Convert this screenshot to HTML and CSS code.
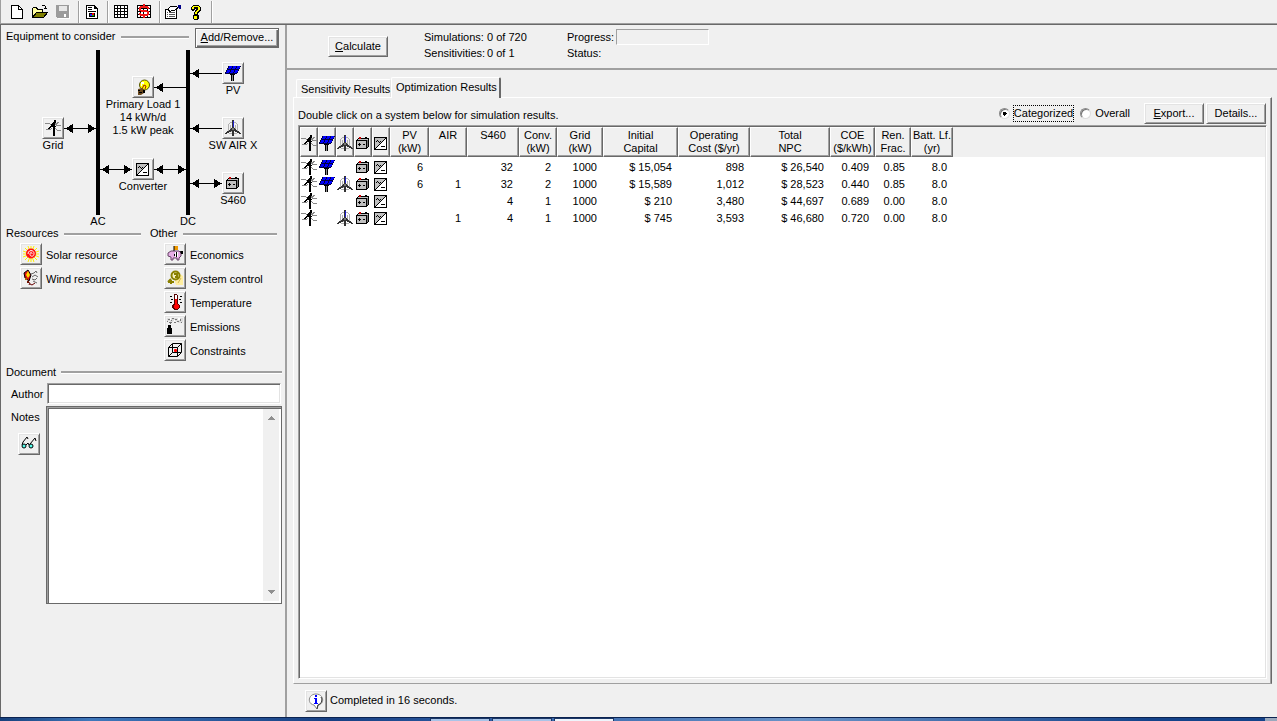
FILE: index.html
```html
<!DOCTYPE html>
<html lang="en">
<head>
<meta charset="utf-8">
<title>Optimization Results</title>
<link rel="stylesheet" href="styles.css">
</head>
<body>
<svg class="defs" aria-hidden="true">
  <symbol id="i-grid" viewBox="0 0 16 16">
    <path d="M0 3.500H4L7 5L14 2.500M1 9.500H5L7 8.500M10 8.500L13 10.500H16M10 4.500L13 5.500H16" fill="none" stroke="#888"/>
    <path d="M9 0h2v3h-1v13h-2v-11h-1v-2h1v-1h1zM6 4h2v2h-1v1h-1v1h-2v-1h1v-1h1zM3 8h2v1h-2zM7 6h4v1h-4z" fill="#000"/>
  </symbol>
  <symbol id="i-pv" viewBox="0 0 16 16">
    <path d="M3 1H16V2H15V4H14V6H13V8H12V9H0V7H1V5H2V3H3Z" fill="#000040"/>
    <path d="M4 1h3v2h-1v1h-3v-1h1zM8 1h3v2h-1v1h-3v-1h1zM12 1h3v2h-1v1h-3v-1h1zM2 5h3v2h-1v1h-3v-1h1zM6 5h3v2h-1v1h-3v-1h1zM10 5h3v2h-1v1h-3v-1h1z" fill="#0000ff"/>
    <path d="M5 9h5v1h-1v6h-3v-6h-1z" fill="#000"/><path d="M7 10h1v6h-1z" fill="#888"/>
  </symbol>
  <symbol id="i-wind" viewBox="0 0 16 16">
    <path d="M4 3h1v1h-1zM11 3h1v1h-1zM3 4h1v7h-1zM12 4h1v7h-1zM5 5h1v6h-1zM10 5h1v6h-1zM5 2h2v1h-2zM9 2h2v1h-2zM1 12h1v1h-1zM4 13h3v1h-3zM9 13h3v1h-3zM6 11h1v1h-1z" fill="#b0b0b0"/>
    <path d="M7 0h2v8h1v1h1v1h1v1h2v1h1v1h1v1h-2v-1h-2v-1h-2v-1h-1v5h-2v-5h-1v1h-2v1h-2v1h-2v-1h1v-1h1v-1h2v-1h1v-1h1v-1h1z" fill="#333"/>
    <path d="M8 1h1v6h-1z" fill="#2222d0"/><path d="M7 8h2v2h-2z" fill="#777"/>
  </symbol>
  <symbol id="i-batt" viewBox="0 0 16 16">
    <path d="M3 3h11v9h-1v1h-1v1h-11v-9h1v-1h1z" fill="#000"/>
    <path d="M3 4h10v1h-10zM2 6h9v7h-9z" fill="#c0c0c0"/><path d="M12 5h1v7h-1z" fill="#777"/>
    <path d="M3 9h3v1h-3zM4 8h1v3h-1zM8 9h2v1h-2zM10 2h2v1h-2z" fill="#000"/><path d="M4 2h2v2h-2z" fill="#d00000"/>
  </symbol>
  <symbol id="i-conv" viewBox="0 0 16 16">
    <path d="M1 2H14V15H1Z" fill="#000"/><path d="M2 3H13V14H2Z" fill="#fff"/><path d="M2 3H13L2 14Z" fill="#c0c0c0"/>
    <path d="M12 3h1v1h-1zM11 4h1v1h-1zM10 5h1v1h-1zM9 6h1v1h-1zM8 7h1v1h-1zM7 8h1v1h-1zM6 9h1v1h-1zM5 10h1v1h-1zM4 11h1v1h-1zM3 12h1v1h-1zM2 13h1v1h-1zM8 11h4v1h-4zM3 6h1v-1h1v1h1v1h1v-1h1v1h-1v1h-1v-1h-1v-1h-1v1h-1z" fill="#000"/>
  </symbol>
</svg>

<header class="toolbar" role="toolbar" aria-label="Standard">
  <button class="tool" aria-label="New"><svg viewBox="0 0 16 16"><path d="M3 2H9L13 6V14H3Z" fill="#fff"/><path d="M2.500 1.500H9.500L13.500 5.500V14.500H2.500ZM9.500 1.500V5.500H13.500" fill="none" stroke="#000"/></svg></button>
  <button class="tool" aria-label="Open"><svg viewBox="0 0 16 16"><path d="M1 4H5V5H11V8H4L1 13Z" fill="#ffffa0"/><path d="M4 8H15L12 13H1Z" fill="#808000"/><path d="M.5 13.500V4.500L1.500 3.500H4.500L5.500 5.500H10.500V7.500M.5 13.500L4.500 8.500H15.500L11.500 13.500ZM9.500 2.500L10.500 1.500H12.500L14.500 4.500M12 4.500H15" fill="none" stroke="#000"/></svg></button>
  <button class="tool" aria-label="Save"><svg viewBox="0 0 16 16"><path d="M2 2H15V15H3L2 14Z" fill="#fff"/><path d="M1 1H14V14H2L1 13Z" fill="#9c9c9c"/><path d="M4 2H12V7H4Z" fill="#e8e8e8"/><path d="M9 10H11V13H9Z" fill="#fff"/></svg></button>
  <span class="sep"></span>
  <button class="tool" aria-label="Report"><svg viewBox="0 0 16 16"><path d="M2 1H11V2H12V3H13V4H14V15H2Z" fill="#000"/><path d="M3 2H10V5H13V14H3Z" fill="#fff"/><path d="M4 3h4v1h-4zM4 5h4v1h-4zM4 7h8v1h-8zM5 9h6v4h-6z" fill="#000"/><path d="M6 10h2v2h-2z" fill="#22f"/><path d="M8 9h2v2h-2z" fill="#f00"/><path d="M8 11h2v1h-2z" fill="#0c0"/></svg></button>
  <span class="sep"></span>
  <button class="tool" aria-label="Table"><svg viewBox="0 0 16 16"><path d="M1 1H15V14H1Z" fill="#000"/><path d="M2 2h2v2h-2zM5 2h2v2h-2zM8 2h3v2h-3zM12 2h2v2h-2zM2 5h2v2h-2zM5 5h2v2h-2zM8 5h3v2h-3zM12 5h2v2h-2zM2 8h2v2h-2zM5 8h2v2h-2zM8 8h3v2h-3zM12 8h2v2h-2zM2 11h2v2h-2zM5 11h2v2h-2zM8 11h3v2h-3zM12 11h2v2h-2z" fill="#fff"/></svg></button>
  <button class="tool" aria-label="Costs"><svg viewBox="0 0 16 16"><path d="M1 1H15V14H1Z" fill="#000"/><path d="M2 2h2v2h-2zM5 2h2v2h-2zM8 2h3v2h-3zM12 2h2v2h-2zM2 5h2v2h-2zM5 5h2v2h-2zM8 5h3v2h-3zM12 5h2v2h-2zM2 8h2v2h-2zM5 8h2v2h-2zM8 8h3v2h-3zM12 8h2v2h-2zM2 11h2v2h-2zM5 11h2v2h-2zM8 11h3v2h-3zM12 11h2v2h-2z" fill="#fff"/><path d="M7 0h2v2h3v1h1v2h-2v-1h-6v2h6v1h2v4h-1v1h-3v2h-2v-2h-3v-1h-1v-2h2v1h6v-2h-6v-1h-2v-4h1v-1h3z" fill="#f01818"/></svg></button>
  <span class="sep"></span>
  <button class="tool" aria-label="Preferences"><svg viewBox="0 0 16 16"><path d="M0 5H12V15H0Z" fill="#000"/><path d="M1 6H11V14H1Z" fill="#fff"/><path d="M2 8h1v1h-1zM4 8h6v1h-6zM2 10h1v1h-1zM4 10h6v1h-6zM2 12h1v1h-1zM4 12h6v1h-6z" fill="#555"/><path d="M3 5L6 2H11L13 4L9 7L7 6L5 8Z" fill="#fff" stroke="#000"/><path d="M13 1H16V5H14V4H13Z" fill="#008"/></svg></button>
  <button class="tool" aria-label="Help"><svg viewBox="0 0 16 16"><path d="M5 1h6v1h1v1h1v4h-1v1h-1v1h-1v2h1v4h-1v1h-4v-1h-1v-4h1v-3h1v-2h1v-1h-1v1h-1v1h-2v-1h-1v-3h1v-1h1z" fill="#000"/><path d="M5 2h6v1h1v3h-1v1h-1v1h-1v2h-2v-2h1v-1h1v-1h1v-3h-4v2h-2v-2h1zM6 12h3v3h-3z" fill="#ff0"/></svg></button>
  <span class="sep"></span>
</header>

<div class="workspace">
  <aside class="side">
    <div class="heading equipment"><h2>Equipment to consider</h2><button class="btn add"><u>A</u>dd/Remove...</button></div>
    <div class="schematic">
      <svg class="wires" viewBox="1 50 283 178" aria-hidden="true">
        <path d="M96 50H100V215H96ZM186 50H190V215H186Z"/>
        <path d="M190 73.500H222M154 87.500H186M64 128.500H96M190 128.500H222M100 169.500H132M154 169.500H186M190 183.500H222" fill="none" stroke="#000"/>
        <path d="M191 73.500L199 69V78ZM155 87.500L163 83V92ZM65 128.500L73 124V133ZM96 128.500L88 124V133ZM191 128.500L199 124V133ZM101 169.500L109 165V174ZM132 169.500L124 165V174ZM155 169.500L163 165V174ZM186 169.500L178 165V174ZM191 183.500L199 179V188ZM222 183.500L214 179V188Z"/>
      </svg>
      <div class="node n-pv"><button class="icon-btn" aria-label="PV"><svg><use href="#i-pv"/></svg></button><span>PV</span></div>
      <div class="node n-load"><button class="icon-btn" aria-label="Primary Load 1"><svg class="smooth" viewBox="0 0 16 16"><circle cx="9.500" cy="6" r="5" fill="#ff0" stroke="#550"/><path d="M6 3H9V5H7V7H6Z" fill="#fffff0"/><path d="M7 10L9 6L11 7L10 10" fill="none" stroke="#a02000"/><path d="M3 10L7 9L10 11L9 14L6 16H3Z" fill="#6b4a20"/><path d="M3 11H5V12H3ZM4 13H7V14H4ZM8 11H10V14H8Z" fill="#000"/></svg></button><span>Primary Load 1<br>14 kWh/d<br>1.5 kW peak</span></div>
      <div class="node n-grid"><button class="icon-btn" aria-label="Grid"><svg><use href="#i-grid"/></svg></button><span>Grid</span></div>
      <div class="node n-wind"><button class="icon-btn" aria-label="SW AIR X"><svg><use href="#i-wind"/></svg></button><span>SW AIR X</span></div>
      <div class="node n-conv"><button class="icon-btn" aria-label="Converter"><svg><use href="#i-conv"/></svg></button><span>Converter</span></div>
      <div class="node n-batt"><button class="icon-btn" aria-label="S460"><svg><use href="#i-batt"/></svg></button><span>S460</span></div>
      <div class="node n-ac">AC</div>
      <div class="node n-dc">DC</div>
    </div>
    <div class="groups">
      <section>
        <div class="heading"><h2>Resources</h2></div>
        <div class="item"><button class="icon-btn" id="solar" aria-labelledby="l-solar"><svg class="smooth" viewBox="0 0 16 16"><path d="M8 0V16M0 8H16M2 2L14 14M14 2L2 14M5 0L11 16M11 0L5 16M0 5L16 11M0 11L16 5" stroke="#fe0" fill="none"/><circle cx="8" cy="7.500" r="5" fill="#f11"/><path d="M5 8C5 3.500 11 3.500 11 7.500S6.500 10.500 7 8S9 6 9 8" fill="none" stroke="#fff"/></svg></button><label id="l-solar" for="solar">Solar resource</label></div>
        <div class="item"><button class="icon-btn" id="wind" aria-labelledby="l-wind"><svg class="smooth" viewBox="0 0 16 16"><path d="M1 3L5 0L8 5L6 11L2 8Z" fill="#e01010" stroke="#000"/><path d="M5 1L7 5L5 8L3 5Z" fill="#fd0"/><path d="M2 8H4V10H2ZM4 11H6V13H4Z" fill="#a60"/><path d="M6 11L4 12L7 13L6 15M7 14L9 15L12 13" fill="none" stroke="#600"/><path d="M8 4L11 3L13 1L14 3M9 7L12 5L15 7M9 9L12 10L14 8M10 11L14 13" fill="none" stroke="#666"/></svg></button><label id="l-wind" for="wind">Wind resource</label></div>
      </section>
      <section>
        <div class="heading"><h2>Other</h2></div>
        <div class="item"><button class="icon-btn" id="econ" aria-labelledby="l-econ"><svg class="smooth" viewBox="0 0 16 16"><path d="M4 5H12L14 7V10L12 12V14H10V12H6V14H4V11L1 10V7Z" fill="#e6aee6" stroke="#646"/><path d="M7 0H11V4H7Z" fill="#e90"/><path d="M7 0V5" stroke="#000"/><path d="M8 6H11V11H8Z" fill="#fff"/><path d="M9 6H10V11H9ZM7 8H8V10H7Z" fill="#000"/><path d="M13 5L16 5V8H14Z" fill="#000"/></svg></button><label id="l-econ" for="econ">Economics</label></div>
        <div class="item"><button class="icon-btn" id="ctrl" aria-labelledby="l-ctrl"><svg class="smooth" viewBox="0 0 16 16"><path d="M9 7L13 4L16 6V15H9L8 12Z" fill="#ffeea0"/><circle cx="8.500" cy="5.500" r="4" fill="#f5efc0" stroke="#8a8000" stroke-width="2"/><path d="M7 4H10V7H8M4 9L1 12M1 12H7M4 10V14" fill="none" stroke="#8a8000" stroke-width="2"/><path d="M11 13L14 8" stroke="#d6b850"/></svg></button><label id="l-ctrl" for="ctrl">System control</label></div>
        <div class="item"><button class="icon-btn" id="temp" aria-labelledby="l-temp"><svg viewBox="0 0 16 16"><path d="M7 0h3v1h1v9h1v1h1v3h-1v1h-1v1h-4v-1h-1v-1h-1v-3h1v-1h1z" fill="#500"/><path d="M8 1h2v4h-2z" fill="#fff"/><path d="M8 5h2v5h1v1h1v3h-1v1h-3v-1h-1v-3h1z" fill="#f00"/><path d="M3 2h2v1h-2zM4 5h2v1h-2zM3 8h2v1h-2zM13 2h2v1h-2zM12 5h2v1h-2zM13 8h2v1h-2z" fill="#000"/></svg></button><label id="l-temp" for="temp">Temperature</label></div>
        <div class="item"><button class="icon-btn" id="emis" aria-labelledby="l-emis"><svg viewBox="0 0 16 16"><path d="M0 16V10H1V7H4V10H5V16Z" fill="#000"/><path d="M0 0h16v4h-2v1h-3v-1h-2v-1h-3v1h-3v-1h-3z" fill="#ddd"/><path d="M1 1h2v1h-2zM4 2h1v1h-1zM5 0h2v1h-2zM8 1h2v1h-2zM10 3h2v1h-2zM13 1h1v2h-1zM14 4h1v1h-1zM2 4h3v1h-3zM3 5h1v1h-1zM7 4h2v1h-2zM0 3h1v1h-1z" fill="#777"/><path d="M3 0h1v2h-1zM7 2h1v1h-1zM11 0h2v2h-2z" fill="#fff"/></svg></button><label id="l-emis" for="emis">Emissions</label></div>
        <div class="item"><button class="icon-btn" id="cons" aria-labelledby="l-cons"><svg class="smooth" viewBox="0 0 16 16"><path d="M1.500 5.500H10.500V14.500H1.500ZM5.500 1.500H14.500V10.500L10.500 14.500M1.500 5.500L5.500 1.500M10.500 5.500L14.500 1.500M5.500 2V10.500H14M5.500 10.500L1.500 14.500" fill="none" stroke="#000"/><path d="M7 8.500H10M8.500 7V10" stroke="#f00" stroke-width="2"/></svg></button><label id="l-cons" for="cons">Constraints</label></div>
      </section>
    </div>
    <div class="heading document"><h2>Document</h2></div>
    <div class="form">
      <label for="author">Author</label><input id="author" type="text">
      <div class="notes-side"><label for="notes">Notes</label><button class="icon-btn" aria-label="View notes"><svg class="smooth" viewBox="0 0 16 16"><path d="M1 9L2 6L6 1L7 3M9 8L14 2L15 5" fill="none" stroke="#000"/><circle cx="3" cy="10" r="2" fill="#5fe" stroke="#000"/><circle cx="10" cy="10" r="2" fill="#5fe" stroke="#000"/><path d="M5 9L7 7L8 9" fill="none" stroke="#000"/></svg></button></div>
      <div class="notes-box"><textarea id="notes"></textarea><div class="scroll" aria-hidden="true"><svg viewBox="0 0 8 4"><path d="M0 4L4 0L8 4Z"/></svg><svg viewBox="0 0 8 4"><path d="M0 0H8L4 4Z"/></svg></div></div>
    </div>
  </aside>

  <main class="main">
    <section class="run">
      <button class="btn"><u>C</u>alculate</button>
      <dl class="counts"><dt>Simulations:</dt><dd>0 of 720</dd><dt>Sensitivities:</dt><dd>0 of 1</dd></dl>
      <dl class="status"><dt>Progress:</dt><dd class="bar"></dd><dt>Status:</dt><dd></dd></dl>
    </section>
    <section class="results">
      <div class="tabs" role="tablist">
        <button class="tab" role="tab" aria-selected="false">Sensitivity Results</button>
        <button class="tab active" role="tab" aria-selected="true">Optimization Results</button>
      </div>
      <div class="pane" role="tabpanel">
        <div class="controls">
          <p>Double click on a system below for simulation results.</p>
          <input type="radio" name="view" id="cat" checked><label class="focus" for="cat">Categorized</label>
          <input type="radio" name="view" id="all"><label for="all">Overall</label>
          <button class="btn wide"><u>E</u>xport...</button><button class="btn wide">Details...</button>
        </div>
        <div class="list">
          <table>
            <colgroup><col class="c-icon" span="5"><col class="c-39"><col class="c-38"><col class="c-52"><col class="c-38"><col class="c-46"><col class="c-75"><col class="c-72"><col class="c-80"><col class="c-45"><col class="c-36"><col class="c-42"><col></colgroup>
            <thead><tr>
              <th><svg class="ico"><use href="#i-grid"/></svg></th><th><svg class="ico"><use href="#i-pv"/></svg></th><th><svg class="ico"><use href="#i-wind"/></svg></th><th><svg class="ico"><use href="#i-batt"/></svg></th><th><svg class="ico"><use href="#i-conv"/></svg></th>
              <th>PV<br>(kW)</th><th>AIR</th><th>S460</th><th>Conv.<br>(kW)</th><th>Grid<br>(kW)</th><th>Initial<br>Capital</th><th>Operating<br>Cost ($/yr)</th><th>Total<br>NPC</th><th>COE<br>($/kWh)</th><th>Ren.<br>Frac.</th><th>Batt. Lf.<br>(yr)</th><td class="rest"></td>
            </tr></thead>
            <tbody>
              <tr><td><svg class="ico"><use href="#i-grid"/></svg></td><td><svg class="ico"><use href="#i-pv"/></svg></td><td></td><td><svg class="ico"><use href="#i-batt"/></svg></td><td><svg class="ico"><use href="#i-conv"/></svg></td><td>6</td><td></td><td>32</td><td>2</td><td>1000</td><td>$ 15,054</td><td>898</td><td>$ 26,540</td><td>0.409</td><td>0.85</td><td>8.0</td><td></td></tr>
              <tr><td><svg class="ico"><use href="#i-grid"/></svg></td><td><svg class="ico"><use href="#i-pv"/></svg></td><td><svg class="ico"><use href="#i-wind"/></svg></td><td><svg class="ico"><use href="#i-batt"/></svg></td><td><svg class="ico"><use href="#i-conv"/></svg></td><td>6</td><td>1</td><td>32</td><td>2</td><td>1000</td><td>$ 15,589</td><td>1,012</td><td>$ 28,523</td><td>0.440</td><td>0.85</td><td>8.0</td><td></td></tr>
              <tr><td><svg class="ico"><use href="#i-grid"/></svg></td><td></td><td></td><td><svg class="ico"><use href="#i-batt"/></svg></td><td><svg class="ico"><use href="#i-conv"/></svg></td><td></td><td></td><td>4</td><td>1</td><td>1000</td><td>$ 210</td><td>3,480</td><td>$ 44,697</td><td>0.689</td><td>0.00</td><td>8.0</td><td></td></tr>
              <tr><td><svg class="ico"><use href="#i-grid"/></svg></td><td></td><td><svg class="ico"><use href="#i-wind"/></svg></td><td><svg class="ico"><use href="#i-batt"/></svg></td><td><svg class="ico"><use href="#i-conv"/></svg></td><td></td><td>1</td><td>4</td><td>1</td><td>1000</td><td>$ 745</td><td>3,593</td><td>$ 46,680</td><td>0.720</td><td>0.00</td><td>8.0</td><td></td></tr>
            </tbody>
          </table>
        </div>
      </div>
    </section>
    <footer class="message"><button class="icon-btn" aria-label="Details"><svg class="smooth" viewBox="0 0 16 16"><path d="M8 1C16 1 17 11 10 12L9 16L6 12C-1 11 0 1 8 1Z" fill="#fff" stroke="#888"/><path d="M13 4C15 8 13 11 10 12L9 16" fill="none" stroke="#333"/><path d="M7 2H9V4H7ZM6 5H9V10H10V11H6V10H7V6H6Z" fill="#00f"/></svg></button><span>Completed in 16 seconds.</span></footer>
  </main>
</div>
<div class="taskbar" aria-hidden="true"><i></i><i></i><i class="on"></i><b></b></div>
</body>
</html>
```
FILE: styles.css
```css
* { box-sizing: border-box; }
body { margin: 0; height: 100vh; display: flex; flex-direction: column; overflow: hidden; background: #f0f0f0; color: #000; font: 11px/13px "Liberation Sans", Arial, sans-serif; }
button, input, textarea { font: inherit; color: inherit; margin: 0; }
h2, p, dl, dd { margin: 0; font: inherit; }
svg { display: block; flex: none; overflow: visible; shape-rendering: crispEdges; }
svg.smooth { shape-rendering: auto; }
.defs { position: absolute; width: 0; height: 0; }

.toolbar { display: flex; align-items: center; height: 24px; flex: none; padding-left: 5px; border-left: 1px solid #a0a0a0; }
.tool { width: 23px; height: 22px; padding: 3px; border: 0; background: none; }
.tool svg { width: 16px; height: 16px; }
.toolbar .sep { width: 1px; height: 22px; margin: 0 2px 0 3px; background: #a0a0a0; box-shadow: 1px 0 #fff; }

.workspace { flex: 1; min-height: 0; display: flex; border-top: 1px solid #696969; box-shadow: 0 -1px #a0a0a0; }
.side { width: 287px; flex: none; display: flex; flex-direction: column; border-left: 1px solid #696969; border-right: 2px solid #a0a0a0; }
.heading { display: flex; align-items: center; gap: 5px; padding-left: 5px; height: 14px; }
.heading::after { content: ""; flex: 1; height: 2px; background: #a0a0a0; border-bottom: 1px solid #fff; }
.heading h2 { white-space: nowrap; }
.equipment { height: 25px; gap: 6px; padding-right: 6px; }
.equipment h2 { padding-bottom: 2px; }
.equipment .btn { order: 2; }

.btn, .icon-btn { border: 1px solid; border-color: #fff #696969 #696969 #fff; background: #f0f0f0; box-shadow: inset 1px 1px #e3e3e3, inset -1px -1px #a0a0a0; }
.btn { height: 21px; padding: 0 7px; line-height: 17px; white-space: nowrap; }
.btn.add { border-color: #696969; width: 84px; padding: 0; height: 20px; box-shadow: inset 1px 1px #fff, inset -1px -1px #696969, inset -2px -2px #a0a0a0; }
.icon-btn { width: 22px; height: 22px; padding: 2px; flex: none; }
.icon-btn svg { width: 16px; height: 16px; }

.schematic { position: relative; height: 177px; }
.wires { position: absolute; left: 0; top: 0; width: 283px; height: 178px; }
.node { position: absolute; width: 90px; display: flex; flex-direction: column; align-items: center; text-align: center; }
.n-pv { left: 187px; top: 12px; }
.n-load { left: 97px; top: 26px; }
.n-grid { left: 7px; top: 67px; }
.n-wind { left: 187px; top: 67px; }
.n-conv { left: 97px; top: 108px; }
.n-batt { left: 187px; top: 122px; }
.n-ac { left: 52px; top: 165px; }
.n-dc { left: 142px; top: 165px; }

.groups { display: grid; grid-template-columns: 140px 132px; gap: 4px; height: 138px; }
.groups section { display: flex; flex-direction: column; gap: 2px; }
.groups .item { display: flex; align-items: center; gap: 4px; height: 22px; padding-left: 19px; }
.groups label { padding-top: 2px; }
.groups h2 { padding-bottom: 2px; }
.document { padding-right: 3px; }
.form { display: grid; grid-template-columns: 36px 236px; column-gap: 9px; row-gap: 2px; align-items: start; padding-top: 4px; }
.form label { padding-left: 10px; line-height: 23px; height: 21px; }
.form > input { height: 21px; width: 234px; margin-left: 1px; border: 1px solid; border-color: #a0a0a0 #fff #fff #a0a0a0; background: #fff; box-shadow: inset 1px 1px #696969, inset -1px -1px #e3e3e3; outline: 0; }
.notes-side { display: flex; flex-direction: column; gap: 6px; }
.notes-side .icon-btn { margin-left: 17px; }
.notes-box { display: flex; height: 198px; border: 1px solid #696969; padding: 2px; box-shadow: inset 1px 1px #a0a0a0, inset 2px 2px #696969; background: #fff; }
.notes-box textarea { flex: 1; min-width: 0; border: 0; padding: 2px; resize: none; outline: 0; overflow: hidden; background: transparent; }
.scroll { width: 16px; display: flex; flex-direction: column; justify-content: space-between; align-items: center; padding: 7px 0; background: #f0f0f0; }
.scroll svg { width: 8px; height: 4px; fill: #909090; }

.main { flex: 1; min-width: 0; display: flex; flex-direction: column; }
.run { display: flex; align-items: flex-start; height: 45px; padding: 4px 0 0 41px; border-bottom: 2px solid #a0a0a0; flex: none; }
.run .btn { width: 60px; margin-top: 7px; padding: 0; }
.run dl { display: grid; align-items: center; grid-auto-rows: 16px; }
.counts { grid-template-columns: 63px 80px; margin-left: 36px; }
.status { grid-template-columns: 49px 93px; }
.status .bar { height: 16px; border: 1px solid; border-color: #a0a0a0 #fff #fff #a0a0a0; }

.results { flex: 1; min-height: 0; display: flex; flex-direction: column; padding: 7px 5px 0 6px; }
.tabs { display: flex; align-items: flex-end; padding-left: 3px; }
.tab { height: 18px; padding: 0 4px; border: 1px solid; border-color: #fff #e3e3e3 transparent #fff; border-bottom: 0; border-radius: 2px 2px 0 0; background: #f0f0f0; line-height: 16px; width: 95px; white-space: nowrap; }
.tab.active { width: 110px; height: 21px; margin-bottom: -1px; padding-bottom: 3px; border-right: 2px solid #696969; z-index: 1; }
.pane { flex: 1; min-height: 0; display: flex; flex-direction: column; padding: 4px; border: 1px solid; border-color: #fff #696969 #a0a0a0 #fff; box-shadow: inset -1px 0 #a0a0a0; }
.controls { display: flex; align-items: center; height: 23px; flex: none; padding-right: 1px; }
.controls p { flex: 1; padding-top: 4px; }
.controls input { appearance: none; width: 11px; height: 11px; margin-right: 4px; border: 1px solid; border-color: #888 #ddd #ddd #888; border-radius: 50%; background: #fff; box-shadow: inset 1px 1px #777; }
.controls input:checked { background: radial-gradient(circle, #000 2px, #fff 2px); }
.controls label { padding: 1px 0; }
.controls label.focus { outline: 1px dotted #000; margin-right: 7px; }
.controls .wide { width: 60px; padding: 0; margin-left: 2px; }
.controls label + .wide { margin-left: 14px; }
.list { flex: 1; min-height: 0; overflow: hidden; background: #fff; border: 1px solid; border-color: #a0a0a0 #fff #fff #a0a0a0; box-shadow: inset 1px 1px #696969, inset -1px -1px #e3e3e3; padding: 1px; }
table { width: 100%; table-layout: fixed; border-collapse: separate; border-spacing: 0; }
.c-icon { width: 18px; } .c-36 { width: 36px; } .c-38 { width: 38px; } .c-39 { width: 39px; } .c-42 { width: 42px; } .c-45 { width: 45px; } .c-46 { width: 46px; } .c-52 { width: 52px; } .c-72 { width: 72px; } .c-75 { width: 75px; } .c-80 { width: 80px; }
th { height: 30px; padding: 1px 0 0; vertical-align: top; font-weight: normal; white-space: nowrap; background: #f0f0f0; border: 1px solid; border-color: #fff #696969 #696969 #fff; box-shadow: inset -1px -1px #a0a0a0; }
th .ico { margin-top: 6px; }
thead .rest { background: #f0f0f0; }
tbody td { height: 17px; padding: 0 6px 0 0; line-height: 17px; vertical-align: top; text-align: right; white-space: nowrap; }
tbody td:nth-child(-n+5) { padding: 0 1px; }
tbody tr:first-child td { height: 19px; padding-top: 2px; }
.ico { width: 16px; height: 16px; }
.message { display: flex; align-items: center; gap: 3px; height: 33px; flex: none; padding-left: 18px; }

.taskbar { display: flex; height: 4px; flex: none; gap: 2px; padding-left: 430px; border-top: 1px solid #0b2350; background: linear-gradient(90deg, #17407c, #3f78bb 90px, #173f82 330px, #3060a8 500px, #6a94c8 800px, #14438a 1150px); }
.taskbar i { width: 60px; background: #a9c4e8; border: 1px solid #1a3767; border-bottom: 0; }
.taskbar .on { background: #eef4fb; }
.taskbar b { width: 12px; margin-left: auto; background: #9aa9bd; }
```
